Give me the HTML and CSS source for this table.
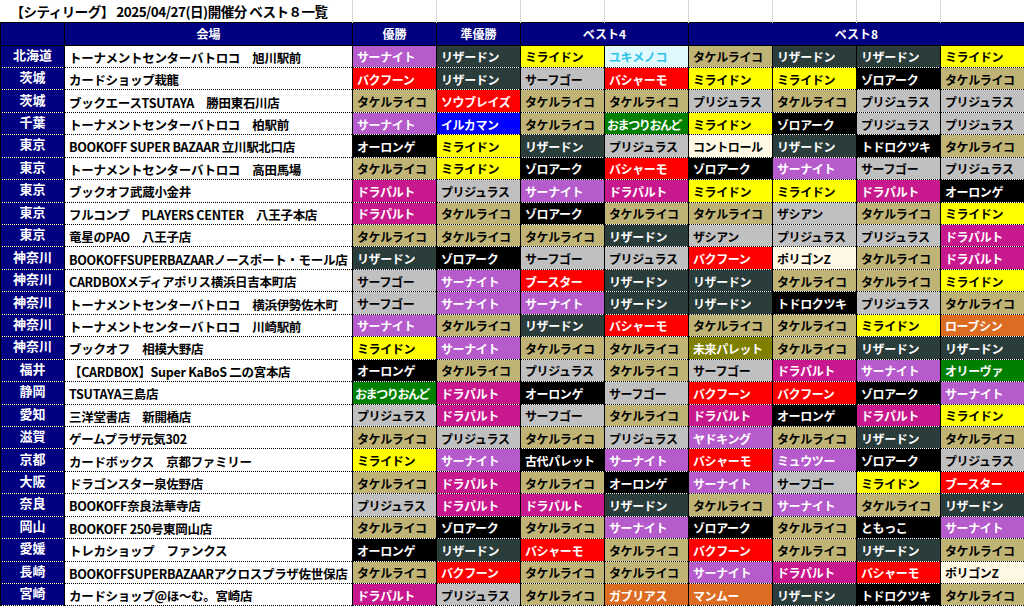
FILE: index.html
```html
<!DOCTYPE html>
<html lang="ja">
<head>
<meta charset="utf-8">
<title>シティリーグ ベスト８一覧</title>
<link rel="stylesheet" href="styles.css">
</head>
<body>
<table class="sheet">
<colgroup>
<col class="w-pref"><col class="w-venue">
<col class="w-res"><col class="w-res"><col class="w-res"><col class="w-res">
<col class="w-res"><col class="w-res"><col class="w-res"><col class="w-res">
</colgroup>
<tr class="r-title">
<td colspan="2" class="title">【シティリーグ】 2025/04/27(日)開催分 ベスト８一覧</td>
<td class="grid"></td><td class="grid"></td><td class="grid"></td><td class="grid"></td><td class="grid"></td><td class="grid"></td><td class="grid"></td><td class="grid"></td>
</tr>
<tr class="r-head">
<th class="hd"></th><th class="hd">会場</th><th class="hd">優勝</th><th class="hd">準優勝</th><th class="hd" colspan="2">ベスト4</th><th class="hd" colspan="4">ベスト8</th>
</tr>
<tr><td class="pref">北海道</td><td class="venue">トーナメントセンターバトロコ　旭川駅前</td><td class="p pu">サーナイト</td><td class="p dk">リザードン</td><td class="p ye">ミライドン</td><td class="p cy">ユキメノコ</td><td class="p kh">タケルライコ</td><td class="p dk">リザードン</td><td class="p dk">リザードン</td><td class="p ye">ミライドン</td></tr>
<tr><td class="pref">茨城</td><td class="venue">カードショップ栽龍</td><td class="p rd">バクフーン</td><td class="p dk">リザードン</td><td class="p gy">サーフゴー</td><td class="p rd">バシャーモ</td><td class="p ye">ミライドン</td><td class="p ye">ミライドン</td><td class="p bk">ゾロアーク</td><td class="p kh">タケルライコ</td></tr>
<tr><td class="pref">茨城</td><td class="venue">ブックエースTSUTAYA　勝田東石川店</td><td class="p kh">タケルライコ</td><td class="p rd">ソウブレイズ</td><td class="p kh">タケルライコ</td><td class="p kh">タケルライコ</td><td class="p gy">プリジュラス</td><td class="p kh">タケルライコ</td><td class="p gy">プリジュラス</td><td class="p gy">プリジュラス</td></tr>
<tr><td class="pref">千葉</td><td class="venue">トーナメントセンターバトロコ　柏駅前</td><td class="p pu">サーナイト</td><td class="p bl">イルカマン</td><td class="p kh">タケルライコ</td><td class="p gr tight">おまつりおんど</td><td class="p ye">ミライドン</td><td class="p bk">ゾロアーク</td><td class="p gy">プリジュラス</td><td class="p gy">プリジュラス</td></tr>
<tr><td class="pref">東京</td><td class="venue">BOOKOFF SUPER BAZAAR 立川駅北口店</td><td class="p bk">オーロンゲ</td><td class="p ye">ミライドン</td><td class="p dk">リザードン</td><td class="p gy">プリジュラス</td><td class="p cr">コントロール</td><td class="p dk">リザードン</td><td class="p bk">トドロクツキ</td><td class="p kh">タケルライコ</td></tr>
<tr><td class="pref">東京</td><td class="venue">トーナメントセンターバトロコ　高田馬場</td><td class="p kh">タケルライコ</td><td class="p ye">ミライドン</td><td class="p bk">ゾロアーク</td><td class="p rd">バシャーモ</td><td class="p bk">ゾロアーク</td><td class="p pu">サーナイト</td><td class="p gy">サーフゴー</td><td class="p gy">プリジュラス</td></tr>
<tr><td class="pref">東京</td><td class="venue">ブックオフ武蔵小金井</td><td class="p mg">ドラパルト</td><td class="p gy">プリジュラス</td><td class="p pu">サーナイト</td><td class="p mg">ドラパルト</td><td class="p ye">ミライドン</td><td class="p ye">ミライドン</td><td class="p mg">ドラパルト</td><td class="p bk">オーロンゲ</td></tr>
<tr><td class="pref">東京</td><td class="venue">フルコンプ　PLAYERS CENTER　八王子本店</td><td class="p mg">ドラパルト</td><td class="p kh">タケルライコ</td><td class="p bk">ゾロアーク</td><td class="p kh">タケルライコ</td><td class="p kh">タケルライコ</td><td class="p gy">ザシアン</td><td class="p kh">タケルライコ</td><td class="p ye">ミライドン</td></tr>
<tr><td class="pref">東京</td><td class="venue">竜星のPAO　八王子店</td><td class="p kh">タケルライコ</td><td class="p kh">タケルライコ</td><td class="p kh">タケルライコ</td><td class="p dk">リザードン</td><td class="p gy">ザシアン</td><td class="p gy">プリジュラス</td><td class="p gy">プリジュラス</td><td class="p mg">ドラパルト</td></tr>
<tr><td class="pref">神奈川</td><td class="venue">BOOKOFFSUPERBAZAARノースポート・モール店</td><td class="p dk">リザードン</td><td class="p bk">ゾロアーク</td><td class="p gy">サーフゴー</td><td class="p gy">プリジュラス</td><td class="p rd">バクフーン</td><td class="p cr">ポリゴンZ</td><td class="p kh">タケルライコ</td><td class="p mg">ドラパルト</td></tr>
<tr><td class="pref">神奈川</td><td class="venue">CARDBOXメディアポリス横浜日吉本町店</td><td class="p gy">サーフゴー</td><td class="p pu">サーナイト</td><td class="p rd">ブースター</td><td class="p dk">リザードン</td><td class="p dk">リザードン</td><td class="p kh">タケルライコ</td><td class="p kh">タケルライコ</td><td class="p ye">ミライドン</td></tr>
<tr><td class="pref">神奈川</td><td class="venue">トーナメントセンターバトロコ　横浜伊勢佐木町</td><td class="p gy">サーフゴー</td><td class="p pu">サーナイト</td><td class="p pu">サーナイト</td><td class="p dk">リザードン</td><td class="p dk">リザードン</td><td class="p bk">トドロクツキ</td><td class="p gy">プリジュラス</td><td class="p kh">タケルライコ</td></tr>
<tr><td class="pref">神奈川</td><td class="venue">トーナメントセンターバトロコ　川崎駅前</td><td class="p pu">サーナイト</td><td class="p kh">タケルライコ</td><td class="p dk">リザードン</td><td class="p rd">バシャーモ</td><td class="p kh">タケルライコ</td><td class="p kh">タケルライコ</td><td class="p ye">ミライドン</td><td class="p or">ローブシン</td></tr>
<tr><td class="pref">神奈川</td><td class="venue">ブックオフ　相模大野店</td><td class="p ye">ミライドン</td><td class="p pu">サーナイト</td><td class="p kh">タケルライコ</td><td class="p kh">タケルライコ</td><td class="p ol">未来パレット</td><td class="p kh">タケルライコ</td><td class="p dk">リザードン</td><td class="p dk">リザードン</td></tr>
<tr><td class="pref">福井</td><td class="venue">【CARDBOX】Super KaBoS 二の宮本店</td><td class="p bk">オーロンゲ</td><td class="p kh">タケルライコ</td><td class="p gy">プリジュラス</td><td class="p kh">タケルライコ</td><td class="p gy">サーフゴー</td><td class="p mg">ドラパルト</td><td class="p pu">サーナイト</td><td class="p gr">オリーヴァ</td></tr>
<tr><td class="pref">静岡</td><td class="venue">TSUTAYA三島店</td><td class="p gr tight">おまつりおんど</td><td class="p mg">ドラパルト</td><td class="p bk">オーロンゲ</td><td class="p gy">サーフゴー</td><td class="p rd">バクフーン</td><td class="p rd">バクフーン</td><td class="p bk">ゾロアーク</td><td class="p pu">サーナイト</td></tr>
<tr><td class="pref">愛知</td><td class="venue">三洋堂書店　新開橋店</td><td class="p gy">プリジュラス</td><td class="p mg">ドラパルト</td><td class="p gy">サーフゴー</td><td class="p kh">タケルライコ</td><td class="p mg">ドラパルト</td><td class="p bk">オーロンゲ</td><td class="p mg">ドラパルト</td><td class="p ye">ミライドン</td></tr>
<tr><td class="pref">滋賀</td><td class="venue">ゲームプラザ元気302</td><td class="p kh">タケルライコ</td><td class="p gy">プリジュラス</td><td class="p kh">タケルライコ</td><td class="p gy">プリジュラス</td><td class="p pu">ヤドキング</td><td class="p kh">タケルライコ</td><td class="p dk">リザードン</td><td class="p kh">タケルライコ</td></tr>
<tr><td class="pref">京都</td><td class="venue">カードボックス　京都ファミリー</td><td class="p ye">ミライドン</td><td class="p pu">サーナイト</td><td class="p bk">古代パレット</td><td class="p pu">サーナイト</td><td class="p rd">バシャーモ</td><td class="p pu">ミュウツー</td><td class="p bk">ゾロアーク</td><td class="p gy">プリジュラス</td></tr>
<tr><td class="pref">大阪</td><td class="venue">ドラゴンスター泉佐野店</td><td class="p kh">タケルライコ</td><td class="p mg">ドラパルト</td><td class="p kh">タケルライコ</td><td class="p bk">オーロンゲ</td><td class="p pu">サーナイト</td><td class="p gy">サーフゴー</td><td class="p ye">ミライドン</td><td class="p rd">ブースター</td></tr>
<tr><td class="pref">奈良</td><td class="venue">BOOKOFF奈良法華寺店</td><td class="p gy">プリジュラス</td><td class="p mg">ドラパルト</td><td class="p mg">ドラパルト</td><td class="p dk">リザードン</td><td class="p kh">タケルライコ</td><td class="p pu">サーナイト</td><td class="p kh">タケルライコ</td><td class="p dk">リザードン</td></tr>
<tr><td class="pref">岡山</td><td class="venue">BOOKOFF 250号東岡山店</td><td class="p kh">タケルライコ</td><td class="p bk">ゾロアーク</td><td class="p kh">タケルライコ</td><td class="p pu">サーナイト</td><td class="p bk">ゾロアーク</td><td class="p kh">タケルライコ</td><td class="p bk">ともっこ</td><td class="p pu">サーナイト</td></tr>
<tr><td class="pref">愛媛</td><td class="venue">トレカショップ　ファンクス</td><td class="p bk">オーロンゲ</td><td class="p dk">リザードン</td><td class="p rd">バシャーモ</td><td class="p kh">タケルライコ</td><td class="p rd">バクフーン</td><td class="p kh">タケルライコ</td><td class="p dk">リザードン</td><td class="p kh">タケルライコ</td></tr>
<tr><td class="pref">長崎</td><td class="venue">BOOKOFFSUPERBAZAARアクロスプラザ佐世保店</td><td class="p kh">タケルライコ</td><td class="p rd">バクフーン</td><td class="p kh">タケルライコ</td><td class="p kh">タケルライコ</td><td class="p pu">サーナイト</td><td class="p mg">ドラパルト</td><td class="p rd">バシャーモ</td><td class="p cr">ポリゴンZ</td></tr>
<tr><td class="pref">宮崎</td><td class="venue">カードショップ@ほ～む。宮崎店</td><td class="p mg">ドラパルト</td><td class="p gy">プリジュラス</td><td class="p kh">タケルライコ</td><td class="p or">ガブリアス</td><td class="p or">マンムー</td><td class="p dk">リザードン</td><td class="p bk">トドロクツキ</td><td class="p kh">タケルライコ</td></tr>
</table>
</body>
</html>
```
FILE: styles.css
```css
html, body {
  margin: 0;
  padding: 0;
  background: #ffffff;
}
body {
  font-family: "Noto Sans CJK JP", "Noto Sans", sans-serif;
  width: 1024px;
  height: 606px;
  overflow: hidden;
}
.sheet {
  border-collapse: collapse;
  table-layout: fixed;
  width: 1024px;
}
.w-pref { width: 64px; }
.w-venue { width: 288px; }
.w-res { width: 84px; }

.sheet td, .sheet th {
  padding: 0;
  white-space: nowrap;
  overflow: hidden;
  font-weight: 700;
  box-sizing: border-box;
}
.r-title td {
  height: 22px;
}
.title {
  font-size: 13.5px;
  color: #000;
  padding-left: 10px !important;
  letter-spacing: -0.5px;
  line-height: 16px;
  vertical-align: middle;
}
.grid {
  border-left: 1px solid #d6d6d6;
}
.r-head th {
  height: 23px;
  background: #000080;
  color: #ffffff;
  font-size: 12px;
  line-height: 16px;
  text-align: center;
  border: 1px solid #000;
  vertical-align: middle;
}
.sheet tr + tr + tr td {
  height: 22.44px;
  border-left: 1px solid #000;
  border-right: 1px solid #000;
  border-bottom: 1px dotted #000;
  vertical-align: middle;
}
.pref {
  background: #000080;
  color: #ffffff;
  font-size: 13px;
  text-align: center;
  line-height: 16px;
  padding-bottom: 3px !important;
}
.venue {
  background: #ffffff;
  color: #000;
  font-size: 12.5px;
  padding-left: 4px !important;
  padding-top: 3px !important;
  letter-spacing: -0.3px;
  line-height: 16px;
}
.p {
  font-size: 12px;
  padding-left: 4px !important;
  padding-top: 2px !important;
  line-height: 16px;
  letter-spacing: -0.4px;
}
.p.tight {
  padding-left: 2px !important;
  letter-spacing: -1.4px;
}
.pu { background: #b65bcc; color: #fff; }
.dk { background: #2b3d3b; color: #fff; }
.ye { background: #ffff00; color: #000; }
.cy { background: #dff9fd; color: #2fc4ea; }
.kh { background: #bfb476; color: #000; }
.rd { background: #ff0000; color: #fff; }
.gy { background: #c0c0c0; color: #000; }
.bl { background: #0000ff; color: #fff; }
.gr { background: #008000; color: #fff; }
.bk { background: #000000; color: #fff; }
.cr { background: #fff8e4; color: #000; }
.mg { background: #c8188e; color: #fff; }
.or { background: #dc6c22; color: #fff; }
.ol { background: #808000; color: #fff; }
```
